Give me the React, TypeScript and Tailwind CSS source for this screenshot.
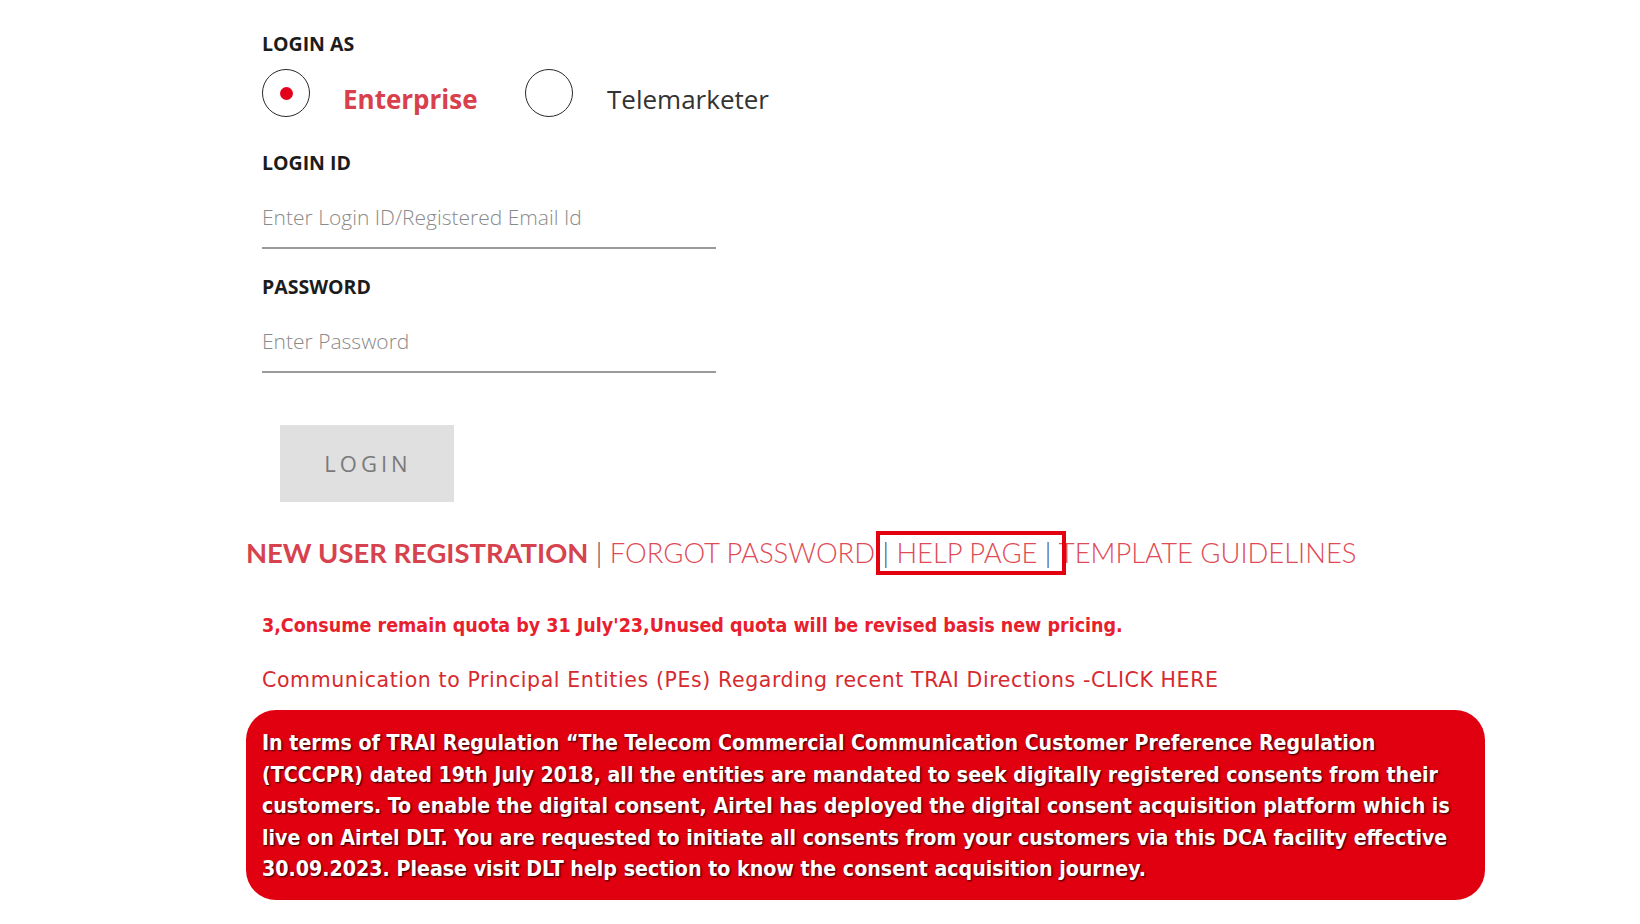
import React, { useState } from 'react';

const form = { fontFamily: '"Open Sans", Lato, sans-serif' };
const links = { fontFamily: 'Lato, "Open Sans", sans-serif' };
const notice = { fontFamily: '"DejaVu Sans Condensed", "DejaVu Sans", Tahoma, sans-serif' };
const plain = { fontFamily: '"DejaVu Sans", Verdana, sans-serif' };

function Radio({ checked }: { checked: boolean }) {
  return (
    <span className="flex h-[48px] w-[48px] shrink-0 items-center justify-center rounded-full border-[1.5px] border-[#2a2a2a]">
      {checked && <span className="h-[13px] w-[13px] rounded-full bg-[#e3001b]" />}
    </span>
  );
}

export default function App() {
  const [role, setRole] = useState('enterprise');

  return (
    <div className="min-h-[924px] w-full bg-white" style={form}>
      <div className="ml-[246px] w-[1239px] pt-[32px]">
        <div className="pl-[16px]">
          <div className="text-[19.5px] font-bold leading-[24px] text-[#1c1c1c]">LOGIN AS</div>
          <div className="mt-[13px] flex items-center">
            <button className="flex items-center" onClick={() => setRole('enterprise')}>
              <Radio checked={role === 'enterprise'} />
              <span
                className={`ml-[33px] mt-[12px] w-[138px] text-left text-[26px] leading-[32px] ${
                  role === 'enterprise' ? 'font-bold text-[#d8404c]' : 'text-[#333]'
                }`}
              >
                Enterprise
              </span>
            </button>
            <button className="ml-[44px] flex items-center" onClick={() => setRole('telemarketer')}>
              <Radio checked={role === 'telemarketer'} />
              <span
                className={`ml-[34px] mt-[12px] text-left text-[26px] leading-[32px] ${
                  role === 'telemarketer' ? 'font-bold text-[#d8404c]' : 'text-[#333]'
                }`}
              >
                Telemarketer
              </span>
            </button>
          </div>

          <div className="mt-[34px] text-[19.5px] font-bold leading-[24px] text-[#1c1c1c]">LOGIN ID</div>
          <input
            className="mt-[12px] block h-[62px] w-[454px] border-b-2 border-[#9a9a9a] text-[21px] font-light text-[#333] outline-none placeholder:text-[#8a8a8a]"
            placeholder="Enter Login ID/Registered Email Id"
          />

          <div className="mt-[26px] text-[19.5px] font-bold leading-[24px] text-[#1c1c1c]">PASSWORD</div>
          <input
            type="password"
            className="mt-[12px] block h-[62px] w-[454px] border-b-2 border-[#9a9a9a] text-[21px] font-light text-[#333] outline-none placeholder:text-[#8a8a8a]"
            placeholder="Enter Password"
          />

          <button className="ml-[18px] mt-[52px] flex h-[77px] w-[174px] items-center justify-center bg-[#e0e0e0] pl-[2px] text-[22px] tracking-[4px] text-[#7a7a7a]">
            LOGIN
          </button>
        </div>

        <div className="mt-[31px] whitespace-nowrap text-[27.4px] leading-[40px]" style={links}>
          <a className="font-bold text-[#d6434e]">NEW USER REGISTRATION</a>
          <span className="font-light text-[#4a4a5a]"> | </span>
          <a className="font-light text-[#df4a55]">FORGOT PASSWORD</a>
          <span className="relative">
            <span className="font-light text-[#4a4a5a]"> | </span>
            <a className="font-light text-[#df4a55]">HELP PAGE</a>
            <span className="font-light text-[#4a4a5a]"> | </span>
            <span className="absolute left-[1px] top-[-5px] h-[44px] w-[190px] border-4 border-[#e3000f]" />
          </span>
          <a className="font-light text-[#df4a55]">TEMPLATE GUIDELINES</a>
        </div>

        <div className="pl-[16px]">
          <p className="mt-[41px] text-[19.5px] font-bold leading-[24px] text-[#e8202d]" style={notice}>
            3,Consume remain quota by 31 July'23,Unused quota will be revised basis new pricing.
          </p>
          <a
            className="mt-[29px] block text-[20.5px] leading-[26px] tracking-[0.6px] text-[#d62a30]"
            style={plain}
          >
            Communication to Principal Entities (PEs) Regarding recent TRAI Directions -CLICK HERE
          </a>
        </div>

        <div
          className="mt-[17px] whitespace-nowrap rounded-[30px] bg-[#e1000f] pb-[15px] pl-[16px] pr-[16px] pt-[17px] text-[21.2px] font-bold leading-[31.5px] text-white [text-shadow:1px_1px_2px_rgba(0,0,0,0.9)]"
          style={notice}
        >
          In terms of TRAI Regulation “The Telecom Commercial Communication Customer Preference Regulation
          <br />
          (TCCCPR) dated 19th July 2018, all the entities are mandated to seek digitally registered consents from their
          <br />
          customers. To enable the digital consent, Airtel has deployed the digital consent acquisition platform which is
          <br />
          live on Airtel DLT. You are requested to initiate all consents from your customers via this DCA facility effective
          <br />
          30.09.2023. Please visit DLT help section to know the consent acquisition journey.
        </div>
      </div>
    </div>
  );
}
